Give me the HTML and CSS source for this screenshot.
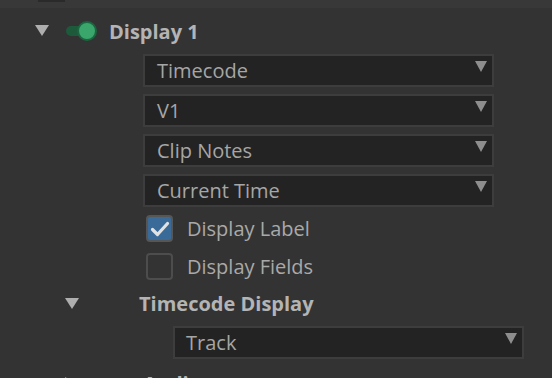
FILE: index.html
```html
<!DOCTYPE html>
<html lang="en">
<head>
    <meta charset="UTF-8">
    <meta name="viewport" content="width=device-width, initial-scale=1.0">
    <title>Display Settings</title>
    <link rel="stylesheet" href="styles.css">
</head>
<body>
    <div class="panel">
        <div class="topband"><span class="stub"></span></div>

        <div class="group-row">
            <span class="tri down"></span>
            <span class="toggle"><span class="knob"></span></span>
            <span class="group-title">Display 1</span>
        </div>

        <div class="fields">
            <div class="select"><span>Timecode</span><span class="arrow"></span></div>
            <div class="select"><span>V1</span><span class="arrow"></span></div>
            <div class="select"><span>Clip Notes</span><span class="arrow"></span></div>
            <div class="select"><span>Current Time</span><span class="arrow"></span></div>
        </div>

        <div class="checks">
            <label class="check"><span class="box checked"><svg viewBox="0 0 26 26" width="26" height="26"><path d="M5.5 13.5 L10.5 18.5 L20.5 7.5" fill="none" stroke="#e2e2e2" stroke-width="3.2" stroke-linecap="round" stroke-linejoin="round"/></svg></span>Display Label</label>
            <label class="check"><span class="box"></span>Display Fields</label>
        </div>

        <div class="sub-row">
            <span class="tri down small"></span>
            <span class="sub-title">Timecode Display</span>
        </div>

        <div class="sub-fields">
            <div class="select"><span>Track</span><span class="arrow"></span></div>
        </div>

        <div class="sub-row next">
            <span class="tri right small"></span>
            <span class="sub-title">Audio</span>
        </div>
    </div>
</body>
</html>
```

FILE: styles.css
```css
body {
    margin: 0;
    background-color: #333333;
    font-family: "Open Sans", "DejaVu Sans", sans-serif;
    color: #a9a9a9;
    overflow: hidden;
    height: 378px;
}
.panel {
    width: 552px;
}
.topband {
    height: 8px;
    background-color: #383838;
}
.stub {
    display: block;
    margin-left: 38px;
    width: 27px;
    height: 2px;
    background-color: #2a2a2a;
}
.tri {
    display: inline-block;
    width: 0;
    height: 0;
}
.tri.down {
    border-left: 7px solid transparent;
    border-right: 7px solid transparent;
    border-top: 11px solid #aeaeae;
}
.tri.right {
    border-top: 6px solid transparent;
    border-bottom: 6px solid transparent;
    border-left: 11px solid #9a9a9a;
}
.group-row {
    display: flex;
    align-items: center;
    height: 30px;
    margin-top: 8px;
    padding-left: 35px;
}
.group-row .tri {
    margin-top: -2px;
}
.toggle {
    position: relative;
    width: 22px;
    height: 10px;
    margin-left: 17px;
    border-radius: 5px;
    background-color: #1d5a3b;
}
.knob {
    position: absolute;
    left: 11px;
    top: -5px;
    width: 16px;
    height: 16px;
    border-radius: 50%;
    background-color: #3aa66c;
    border: 2px solid #1b6640;
}
.group-title {
    margin-left: 21px;
    font-weight: 700;
    font-size: 20px;
    color: #b4b4b4;
}
.fields {
    display: flex;
    flex-direction: column;
    gap: 7px;
    margin-top: 8px;
    margin-left: 143px;
    width: 351px;
}
.select {
    display: flex;
    align-items: center;
    justify-content: space-between;
    box-sizing: border-box;
    height: 33px;
    padding: 0 5px 0 12px;
    background-color: #232323;
    border: 2px solid #3d3d3d;
    font-size: 20px;
    color: #a6a6a6;
}
.arrow {
    width: 0;
    height: 0;
    margin-top: -8px;
    border-left: 6px solid transparent;
    border-right: 6px solid transparent;
    border-top: 11px solid #8e8e8e;
}
.checks {
    display: flex;
    flex-direction: column;
    gap: 11px;
    margin-top: 8px;
    margin-left: 146px;
}
.check {
    display: flex;
    align-items: center;
    height: 27px;
    font-size: 20px;
    color: #a9a9a9;
}
.box {
    box-sizing: border-box;
    width: 27px;
    height: 27px;
    margin-right: 14px;
    border: 2px solid #4d4d4d;
    border-radius: 4px;
}
.box.checked {
    background-color: #3a6b98;
    border-color: #565656;
}
.box svg {
    display: block;
    margin: -1px 0 0 -1px;
}
.sub-row {
    display: flex;
    align-items: center;
    height: 28px;
    margin-top: 9px;
    padding-left: 65px;
}
.sub-title {
    margin-left: 60px;
    font-weight: 700;
    font-size: 20px;
    color: #b4b4b4;
}
.sub-fields {
    margin-top: 9px;
    margin-left: 173px;
    width: 351px;
}
.sub-fields .select {
    padding-left: 11px;
}
.sub-row.next {
    margin-top: 10px;
}
.sub-row.next .sub-title {
    margin-left: 67px;
}
```
